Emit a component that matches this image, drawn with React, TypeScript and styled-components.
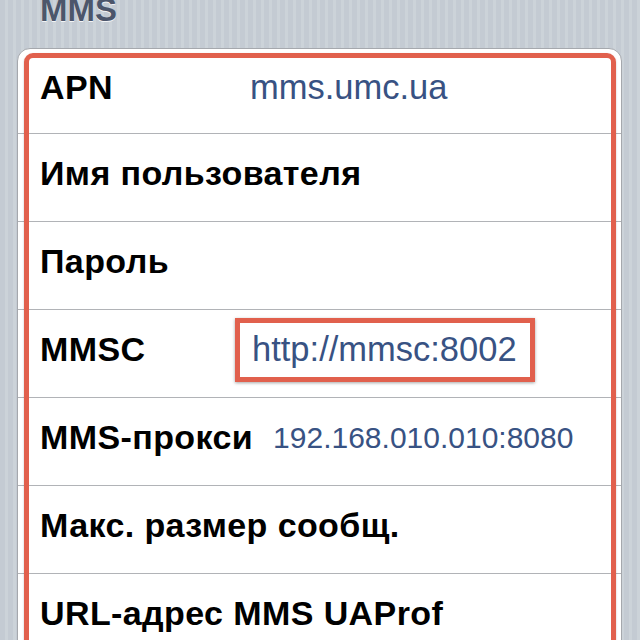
import React from 'react'
import styled, { createGlobalStyle } from 'styled-components'

const Global = createGlobalStyle`
  html, body {
    margin: 0;
    padding: 0;
    height: 100%;
    overflow: hidden;
  }
  body {
    font-family: "Liberation Sans", Arial, Helvetica, sans-serif;
    background: repeating-linear-gradient(90deg, #c4cbd3 0 5px, #ccd3d9 5px 8px);
  }
`

const Screen = styled.div`
  width: 640px;
  height: 640px;
  overflow: hidden;
`

const GroupTitle = styled.h2`
  margin: -7px 0 0 40px;
  height: 28px;
  font-size: 33px;
  font-weight: bold;
  line-height: 34px;
  color: #4c566b;
  text-shadow: 0 1px 0 rgba(255, 255, 255, 0.8);
`

const Card = styled.div`
  position: relative;
  margin: 27px 18px 0 17px;
  background: #fff;
  border: 1px solid #a5a8ad;
  border-radius: 13px;
`

const Row = styled.div`
  display: flex;
  align-items: center;
  height: 88px;
  padding: 0 0 8px 22px;
  box-sizing: border-box;
  border-bottom: 1px solid #b1b3b7;
  &:first-child {
    height: 85px;
  }
`

const Label = styled.span`
  min-width: 190px;
  margin-right: 20px;
  font-size: 34px;
  font-weight: bold;
  letter-spacing: 0.4px;
  color: #000;
  white-space: nowrap;
`

const Value = styled.span<{ $small?: boolean; $boxed?: boolean }>`
  font-size: ${p => (p.$small ? '30px' : '34.5px')};
  color: #385283;
  white-space: nowrap;
  ${p =>
    p.$boxed &&
    `
    margin-left: -15px;
    padding: 7px 13px 8px 12px;
    border: 5px solid #e1604d;
    box-shadow: 0 1px 3px rgba(0,0,0,0.35);
  `}
`

const Highlight = styled.div`
  position: absolute;
  top: 4px;
  left: 6px;
  right: 5px;
  bottom: -20px;
  border: 5px solid #e1604d;
  border-radius: 9px 9px 0 0;
  box-shadow: 0 1px 2px rgba(0, 0, 0, 0.25);
  pointer-events: none;
`

type Field = { label: string; value?: string; small?: boolean; boxed?: boolean }

const fields: Field[] = [
  { label: 'APN', value: 'mms.umc.ua' },
  { label: 'Имя пользователя' },
  { label: 'Пароль' },
  { label: 'MMSC', value: 'http://mmsc:8002', boxed: true },
  { label: 'MMS-прокси', value: '192.168.010.010:8080', small: true },
  { label: 'Макс. размер сообщ.' },
  { label: 'URL-адрес MMS UAProf' },
]

const App = () => (
  <>
    <Global />
    <Screen>
      <GroupTitle>MMS</GroupTitle>
      <Card>
        {fields.map(f => (
          <Row key={f.label}>
            <Label>{f.label}</Label>
            {f.value && (
              <Value $small={f.small} $boxed={f.boxed}>
                {f.value}
              </Value>
            )}
          </Row>
        ))}
        <Highlight />
      </Card>
    </Screen>
  </>
)

export default App
